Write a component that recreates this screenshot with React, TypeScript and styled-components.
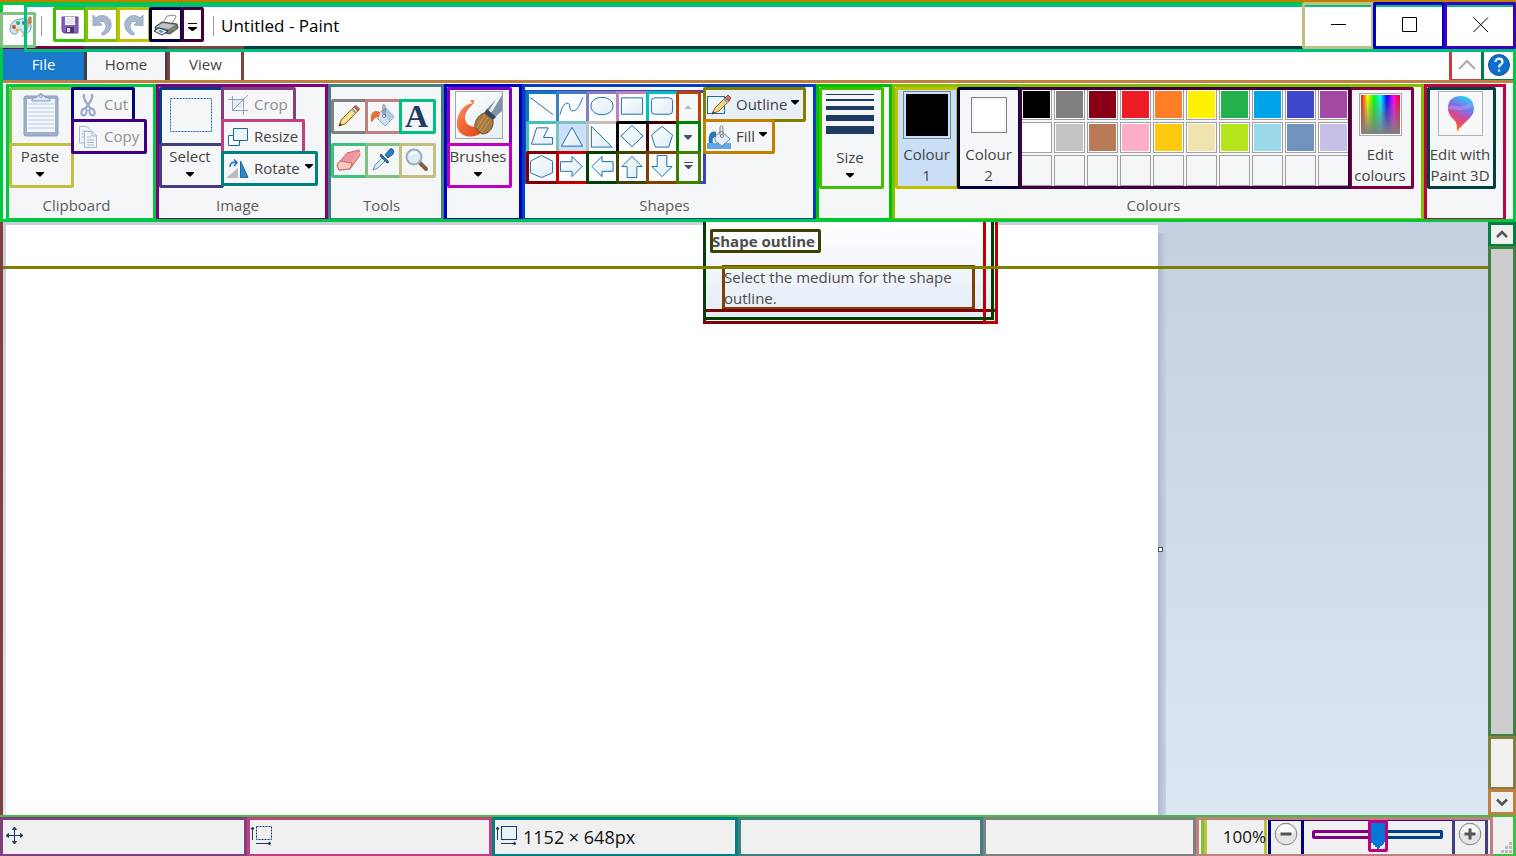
import React from "react";
import styled, { createGlobalStyle, css } from "styled-components";

const Global = createGlobalStyle`
  *, *::before, *::after { box-sizing: border-box; }
  body { margin: 0; overflow: hidden; }
  button, input { font: inherit; color: inherit; }
`;

const App_ = styled.div`
  display: flex;
  flex-direction: column;
  height: 100vh;
  border-top: 2px solid #c08000;
  background: #fff;
  color: #444;
  font-family: "Open Sans", "Noto Sans", sans-serif;
  font-size: 15px;
  line-height: 21px;
`;

const Frame = styled.div`
  border: 3px solid #00c840;
`;

/* ---------- title bar ---------- */
const TitleBar = styled.header`
  position: relative;
  display: flex;
  align-items: flex-start;
  height: 41px;
  &::after {
    content: "";
    position: absolute;
    inset: -1px -3px -6px 21px;
    border: 3px solid #00c080;
    pointer-events: none;
    z-index: 1;
  }
`;
const Boxed = css<{ $line: string }>`
  border: 3px solid ${(p) => p.$line};
  border-radius: 2px;
`;
const AppIcon = styled.div<{ $line: string }>`
  ${Boxed}
  width: 36px;
  height: 36px;
  margin: 7px 5px 0 -3px;
  display: flex;
  align-items: flex-start;
  justify-content: flex-end;
  position: relative;
`;
const Divider = styled.span`
  width: 1px;
  height: 20px;
  margin-top: 11px;
  background: #999;
`;
const QuickBar = styled.div`
  display: flex;
  margin: 2px 9px 0 11px;
  position: relative;
  z-index: 2;
`;
const QuickButton = styled.button<{ $line: string; $narrow?: boolean }>`
  ${Boxed}
  width: ${(p) => (p.$narrow ? 23 : 34)}px;
  height: 35px;
  padding: 0;
  background: none;
  display: flex;
  align-items: center;
  justify-content: center;
  & + & { margin-left: -2px; }
`;
const Title = styled.h1`
  margin: 8px 0 0 7px;
  flex: 1;
  color: #000;
  font-size: 17px;
  line-height: 26px;
  font-weight: 400;
`;
const WindowControls = styled.div`
  display: flex;
  margin: -3px -3px -3px 0;
  position: relative;
  z-index: 2;
`;
const WindowButton = styled.button<{ $line: string }>`
  ${Boxed}
  width: 72px;
  height: 47px;
  padding: 0 0 2px 2px;
  background: none;
  display: flex;
  align-items: center;
  justify-content: center;
  & + & { margin-left: -1px; }
`;

/* ---------- tabs ---------- */
const TabStrip = styled.nav`
  display: flex;
  height: 37px;
  border-bottom: 3px solid #c08040;
`;
const Tab = styled.button<{ $line: string; $kind?: "file" | "active" }>`
  border: 0 solid ${(p) => p.$line};
  border-width: ${(p) => (p.$kind === "file" ? "3px 0 0" : "3px 3px 0")};
  width: ${(p) => (p.$kind === "file" ? 81 : p.$kind === "active" ? 84 : 77)}px;
  margin-right: ${(p) => (p.$kind === "active" ? "-1px" : 0)};
  padding: 0 0 1px;
  background: ${(p) => (p.$kind === "file" ? "#1979ca" : p.$kind === "active" ? "#f5f6f8" : "#fff")};
  color: ${(p) => (p.$kind === "file" ? "#fff" : "#444")};
`;
const TabSpace = styled.div`
  flex: 1;
  border-top: 3px solid #004040;
`;
const TabTool = styled.button<{ $line: string }>`
  border: solid ${(p) => p.$line};
  border-width: 0 0 1px 3px;
  width: 32px;
  margin-top: 6px;
  padding: 0;
  background: none;
  display: flex;
  align-items: center;
  justify-content: center;
`;

/* ---------- ribbon ---------- */
const Ribbon = styled.div`
  display: flex;
  height: 136px;
  padding-left: 3px;
  background: #f5f6f8;
  border-top: 1px solid #fff;
`;
const Group = styled.section<{ $line: string; $width: number }>`
  flex: 0 0 ${(p) => p.$width}px;
  display: flex;
  flex-direction: column;
  border: 3px solid ${(p) => p.$line};
  border-bottom-width: 1px;
`;
const GroupBody = styled.div`
  display: flex;
  align-items: flex-start;
  flex: 1;
`;
const GroupLabel = styled.h2`
  margin: 0;
  padding: 0 9px 2px 0;
  text-align: center;
  color: #5c5c5c;
  font-size: 15px;
  font-weight: 400;
  line-height: 21px;
`;
const Split = styled.div`
  width: 65px;
  display: flex;
  flex-direction: column;
`;
const SplitIcon = styled.button<{ $line: string }>`
  ${Boxed}
  height: 59px;
  padding: 0 2px 3px 0;
  background: none;
  display: flex;
  align-items: center;
  justify-content: center;
`;
const SplitText = styled.button<{ $line: string }>`
  ${Boxed}
  height: 45px;
  margin-top: -3px;
  padding: 0 3px 2px 0;
  background: none;
  display: flex;
  flex-direction: column;
  align-items: center;
  white-space: nowrap;
`;
const Stack = styled.div`
  display: flex;
  flex-direction: column;
  align-items: flex-start;
  margin-left: -3px;
`;
const RowButton = styled.button<{ $line: string; $width: number; $tight?: boolean; $hot?: boolean }>`
  ${Boxed}
  width: ${(p) => p.$width}px;
  height: 35px;
  padding: 0 0 0 ${(p) => (p.$tight ? 1 : 4)}px;
  background: ${(p) => (p.$hot ? "#e8eff7" : "transparent")};
  display: flex;
  align-items: center;
  gap: ${(p) => (p.$tight ? 5 : 6)}px;
  white-space: nowrap;
  & + & { margin-top: -3px; }
  &:disabled { color: #8f8f8f; }
  svg { flex: none; }
`;
const ToolGrid = styled.div`
  display: grid;
  grid-template-columns: repeat(3, 34px);
  grid-auto-rows: 44px;
  padding-top: 12px;
`;
const ToolButton = styled.button<{ $line: string }>`
  ${Boxed}
  width: 37px;
  height: 35px;
  padding: 0 2px 2px 0;
  background: none;
  display: flex;
  align-items: center;
  justify-content: center;
`;
const Gallery = styled.div`
  width: 181px;
  height: 94px;
  margin-top: 3px;
  border: 3px solid #4040c0;
  background: #fcfdfe;
  display: flex;
`;
const ShapeGrid = styled.div`
  display: grid;
  grid-template-columns: repeat(5, 30px);
  grid-auto-rows: 30px;
  margin: -2px 0 0 -2px;
`;
const ShapeCell = styled.button<{ $line: string; $on?: boolean }>`
  ${Boxed}
  width: 33px;
  height: 33px;
  padding: 0 1px 2px 0;
  background: ${(p) => (p.$on ? "#cce1f9" : "#fcfdfe")};
  display: flex;
  align-items: center;
  justify-content: center;
`;
const GalleryScroll = styled.div`
  display: grid;
  grid-auto-rows: 30px;
  margin-top: -2px;
`;
const ScrollCell = styled.button<{ $line: string }>`
  ${Boxed}
  width: 25px;
  height: 33px;
  padding: 0 1px 1px 0;
  background: #f7f8fa;
  display: flex;
  align-items: center;
  justify-content: center;
`;
const TallButton = styled.button<{ $line: string; $width?: number; $on?: boolean }>`
  ${Boxed}
  width: ${(p) => p.$width ?? 65}px;
  height: 102px;
  padding: 0 3px 0 0;
  background: ${(p) => (p.$on ? "#c9dff7" : "transparent")};
  display: flex;
  flex-direction: column;
  align-items: center;
  white-space: nowrap;
  flex: none;
`;
const TallIcon = styled.span`
  height: 57px;
  padding-bottom: 5px;
  display: flex;
  align-items: center;
  justify-content: center;
`;
const ColourWell = styled.span<{ $size: number; $fill: string }>`
  width: ${(p) => p.$size}px;
  height: ${(p) => p.$size}px;
  border: 1px solid #808080;
  padding: 2px;
  background: ${(p) => p.$fill} content-box;
`;
const ColourRow = styled.div`
  display: flex;
  > button { padding-right: 1px; }
  > button + button { margin-left: -2px; }
`;
const Palette = styled.div`
  position: relative;
  display: grid;
  grid-template-columns: repeat(10, 31px);
  grid-auto-rows: 31px;
  gap: 2px;
  height: 102px;
  margin: 0 -2px;
  padding: 2px;
  &::after {
    content: "";
    position: absolute;
    inset: 0;
    border: 3px solid #400040;
    pointer-events: none;
  }
`;
const Swatch = styled.button<{ $fill?: string }>`
  border: 1px solid #a0a0a0;
  padding: 1px;
  background: ${(p) => (p.$fill ? `linear-gradient(${p.$fill}, ${p.$fill}) content-box, #fff` : "#f5f6f8")};
`;

/* ---------- tooltip ---------- */
const Tooltip = styled.div`
  position: absolute;
  left: 703px;
  top: 0;
  z-index: 2;
  isolation: isolate;
  &::before {
    content: "";
    position: absolute;
    z-index: 1;
    inset: 87px -4px -4px 0;
    border: 3px solid #800000;
  }
  &::after {
    content: "";
    position: absolute;
    z-index: 1;
    inset: 0 -4px -4px 280px;
    border: 3px solid #c00000;
    border-top: 0;
  }
`;
const TooltipBody = styled.div`
  width: 291px;
  height: 98px;
  padding: 7px 4px 0;
  border: 3px solid #004000;
  border-top: 0;
  background: linear-gradient(#fff, #e4ebf7) padding-box;
  color: #4c4c4c;
`;
const TooltipFront = styled.div`
  position: relative;
  z-index: 2;
  border: 3px solid #004000;
  border-top: 0;
  width: 291px;
  height: 98px;
  margin-top: -98px;
`;
const TooltipTitle = styled.strong`
  display: block;
  width: 111px;
  height: 24px;
  border: 3px solid #404000;
  border-radius: 2px;
  font-size: 15px;
  line-height: 18px;
  white-space: nowrap;
  text-indent: -1px;
`;
const TooltipText = styled.p`
  width: 253px;
  margin: 12px 0 0 12px;
  border: 3px solid #804000;
  height: 45px;
  line-height: 21px;
  > span {
    display: block;
    margin: -1px;
  }
`;

/* ---------- work area ---------- */
const WorkArea = styled.main`
  flex: 1;
  min-height: 0;
  position: relative;
  display: flex;
`;
const Desk = styled.div`
  flex: 1;
  min-width: 0;
  overflow: hidden;
  border-left: 3px solid #804040;
  padding: 3px;
  background: linear-gradient(#c5cfdf, #dce6f3);
  &::after {
    content: "";
    position: absolute;
    left: 3px;
    right: 28px;
    top: 44px;
    height: 3px;
    background: #808000;
    z-index: 3;
  }
`;
const Sheet = styled.div`
  position: relative;
  width: 1152px;
  height: 648px;
  background: #fff;
  &::before {
    content: "";
    position: absolute;
    left: 100%;
    top: 8px;
    width: 8px;
    height: 100%;
    background: linear-gradient(90deg, #acb9d0, #c6d1e2);
  }
`;
const Handle = styled.span`
  position: absolute;
  left: 100%;
  top: 50%;
  width: 5px;
  height: 5px;
  margin-top: -2px;
  border: 1px solid #555;
  background: #fff;
`;
const Scrollbar = styled.div`
  width: 28px;
  display: flex;
  flex-direction: column;
  background: #f0f0f0;
`;
const ScrollPart = styled.button<{ $line: string; $grow?: boolean; $height?: number; $fill?: string }>`
  border: 3px solid ${(p) => p.$line};
  flex: ${(p) => (p.$grow ? "1" : `0 0 ${p.$height}px`)};
  padding: 0;
  background: ${(p) => p.$fill ?? "#f0f0f0"};
  display: flex;
  align-items: center;
  justify-content: center;
  & + & { margin-top: -1px; }
`;

/* ---------- status bar ---------- */
const StatusBar = styled.footer`
  display: flex;
  height: 41px;
  border-top: 2px solid #40c040;
  background: #f0f0f0;
  color: #111;
  font-size: 18px;
`;
const StatusCell = styled.div<{ $line: string; $width: number; $grow?: boolean; $inset?: boolean }>`
  flex: ${(p) => (p.$grow ? 1 : 0)} 0 ${(p) => p.$width}px;
  border: 3px solid ${(p) => p.$line};
  border-bottom-width: 2px;
  padding-left: ${(p) => (p.$inset ? 2 : 0)}px;
  display: flex;
  align-items: center;
  gap: 6px;
  svg { margin-bottom: 3px; }
`;
const ZoomCell = styled.div`
  flex: none;
  display: flex;
  border: 3px solid #c08080;
  border-bottom-width: 2px;
  padding: 0 2px;
`;
const ZoomValue = styled.output`
  width: 66px;
  margin-right: 1px;
  border-left: 3px solid #80c040;
  box-shadow: inset 3px 0 #c0c040, inset -3px 0 #c0c040;
  font-size: 17px;
  line-height: 34px;
  text-align: right;
  padding-right: 1px;
`;
const ZoomButton = styled.button<{ $line: string }>`
  width: 36px;
  border: solid ${(p) => p.$line};
  border-width: 1px 3px 0;
  padding: 1px 1px 0 0;
  background: none;
  display: flex;
  justify-content: center;
`;
const ZoomTrack = styled.div`
  width: 148px;
  border-top: 1px solid #400080;
  padding-left: 8px;
`;
const Range = styled.input`
  appearance: none;
  display: block;
  width: 131px;
  height: 31px;
  margin: 0;
  background: none;
  &::-webkit-slider-runnable-track {
    height: 9px;
    margin-top: -4px;
    border: 3px solid transparent;
    border-radius: 2px;
    background: linear-gradient(#e7eaea, #e7eaea) padding-box,
      linear-gradient(90deg, #800080 50%, #004080 50%) border-box;
  }
  &::-webkit-slider-thumb {
    appearance: none;
    width: 20px;
    height: 32px;
    margin-top: -13px;
    border: 3px solid #c00080;
    border-radius: 2px;
    background: linear-gradient(#0078d7, #0078d7) 0 0 / 100% 19px no-repeat,
      linear-gradient(to top right, transparent 50%, #0078d7 50%) 0 19px / 7px 7px no-repeat,
      linear-gradient(to top left, transparent 50%, #0078d7 50%) 7px 19px / 7px 7px no-repeat,
      #f0f0f0;
  }
`;
const Grip = styled.div`
  width: 23px;
  border: solid #40c040;
  border-width: 0 3px 2px 0;
  display: flex;
  align-items: flex-end;
  justify-content: flex-end;
`;

/* ---------- drawings ---------- */
const Arrow = ({ fill = "#000" }: { fill?: string }) => (
  <svg width="8" height="5" viewBox="0 0 8 5"><path d="M0 0H8V1L4.5 4.5H3.5L0 1Z" fill={fill} /></svg>
);
const ArrowSlot = styled.span`
  height: 15px;
  display: flex;
  align-items: center;
`;
const RowArrow = styled.span`
  display: flex;
  margin: 0 0 4px -1px;
`;

const PaletteIcon = () => (
  <svg width="24" height="24" viewBox="0 0 24 24">
    <path d="M1 14C1 8 6 4 12 4C18 3 23 7 22 13C21 18 16 20 14 18C12 16 13 14 10 15C8 16 9 20 5 19C2 18 1 17 1 14Z" fill="#cfe6f5" stroke="#5c9fca" />
    <circle cx="5" cy="12" r="2" fill="#d6453c" /><circle cx="9" cy="8" r="2" fill="#3fae49" /><circle cx="15" cy="8" r="2" fill="#2a78d0" /><circle cx="8" cy="15" r="1.6" fill="#f0b41e" />
    <path d="M20 1L23 3L16 21L13 22L14 18Z" fill="#f0a95a" /><path d="M19 3L22 1L23 8L19 9Z" fill="#b68a68" />
  </svg>
);
const SaveIcon = () => (
  <svg width="18" height="18" viewBox="0 0 18 18">
    <path d="M1 1H17V17H3L1 15Z" fill="#8760b5" stroke="#63449a" /><path d="M4 1H14V9H4Z" fill="#fff" /><path d="M5 3H13M5 5H13M5 7H13" stroke="#c9c9d8" />
    <path d="M5 11H13V17H5Z" fill="#4b3670" /><path d="M6 12H9V16H6Z" fill="#e2d9f0" />
  </svg>
);
const UndoIcon = ({ flip }: { flip?: boolean }) => (
  <svg width="22" height="24" viewBox="0 0 22 24">
    <path transform={flip ? "translate(22 0) scale(-1 1)" : undefined} d="M2 2L5 5C9 1 16 2 19 7C22 13 19 20 12 22C11 22 10 21 11 20C15 17 16 13 14 10C12 8 10 8 8 9L11 12L2 12.500Z" fill="#a9b8cf" stroke="#98a9c4" />
  </svg>
);
const PrinterIcon = () => (
  <svg width="26" height="22" viewBox="0 0 26 22">
    <path d="M14 2L22 1L23 3L18 11L10 9Z" fill="#fff" stroke="#8a8a8a" />
    <path d="M2 13L9 8L24 10L25 14L17 20L3 17Z" fill="#777" stroke="#444" /><path d="M3 13L10 9L22 11L16 15Z" fill="#bfc3c7" />
    <path d="M1 17L6 14L15 17L9 21Z" fill="#eef7fc" stroke="#333" /><path d="M5 17L8 16L11 18L8 19Z" fill="#3c9ccc" /><circle cx="21" cy="15" r="1" fill="#76c043" />
  </svg>
);
const ClipboardIcon = () => (
  <svg width="36" height="44" viewBox="0 0 36 44">
    <rect x="1" y="3" width="34" height="40" rx="2" fill="#9fb0ca" stroke="#8a9dbb" /><rect x="4" y="6" width="28" height="33" fill="#f1f7fd" />
    <path d="M5 11H31M5 15H31M5 19H31M5 23H31M5 27H31M5 31H31M5 35H31" stroke="#b9cce3" />
    <path d="M9 8V6C11 4 14 5 15 3C16 0 20 0 21 3C22 5 25 4 27 6V8Z" fill="#dbe5f2" stroke="#8597b5" /><circle cx="18" cy="3" r="1.4" fill="#fff" stroke="#8597b5" />
  </svg>
);
const CutIcon = () => (
  <svg width="20" height="24" viewBox="0 0 20 24" fill="none" stroke="#9dacc6">
    <path d="M6 1C5 6 8 9 13 16M14 1C15 6 12 9 7 16" strokeWidth="2.4" /><ellipse cx="6" cy="19" rx="2.400" ry="3.400" strokeWidth="2.200" transform="rotate(20 6 19)" /><ellipse cx="14" cy="19" rx="2.400" ry="3.400" strokeWidth="2.200" transform="rotate(-20 14 19)" />
  </svg>
);
const CopyIcon = () => (
  <svg width="20" height="24" viewBox="0 0 20 24" fill="#f2f6fb" stroke="#a9b7ce">
    <path d="M1.500 1.500H9L13.500 6V18H1.500Z" /><path d="M4 6H9M4 9H9M4 12H9" /><path d="M6.500 6.500H14L18.500 11V22.500H6.500Z" /><path d="M14 6.500V11H18.500M9 12H13M9 15H16M9 17.500H16M9 20H16" fill="none" />
  </svg>
);
const SelectIcon = () => (
  <svg width="42" height="34" viewBox="0 0 42 34"><rect x=".5" y=".5" width="41" height="33" fill="none" stroke="#1b6ba8" strokeDasharray="2 1" /></svg>
);
const CropIcon = () => (
  <svg width="20" height="22" viewBox="0 0 20 22" fill="none" stroke="#8fa1bf">
    <path d="M6 6H14V14H6Z" fill="#e3ebf5" stroke="none" /><path d="M4.500 2V16.500H20M0 5.500H15.500V21M4.500 16.500L20 1" />
  </svg>
);
const ResizeIcon = () => (
  <svg width="20" height="20" viewBox="0 0 20 20" fill="#fff" stroke="#1b6ba8"><path d="M.5 8.500H11.500V18.500H.5Z" /><path d="M5.500 1.500H19.500V13.500H5.500Z" fill="#eaf4fa" /></svg>
);
const RotateIcon = () => (
  <svg width="20" height="20" viewBox="2 0 20 20" overflow="visible">
    <path d="M0 19H12V9Z" fill="#b9bcc0" /><path d="M14.500 2V18.500H22Z" fill="#2f86c8" stroke="#1b6ba8" /><path d="M4 8C4 4 6 3 10 3.500M8 .5L11 3.500L8 7" fill="none" stroke="#1976d2" strokeWidth="1.600" />
  </svg>
);
const PencilIcon = () => (
  <svg width="22" height="22" viewBox="0 0 22 22">
    <path d="M1 21L3 15L16 2L20 6L7 19Z" fill="#f7d775" stroke="#8a6a2c" /><path d="M5 17L18 4" stroke="#fff2b8" strokeWidth="1.500" /><path d="M16 2L18 0.500L21.500 4L20 6Z" fill="#d9626a" stroke="#a34a50" /><path d="M14 4L18 8" stroke="#8f9aa5" strokeWidth="2" /><path d="M1 21L2 18L4 20Z" fill="#333" />
  </svg>
);
const BucketIcon = () => (
  <svg width="25" height="24" viewBox="0 0 25 24">
    <path d="M9 9L16 4L24 13L15 22L8 15Z" fill="#cfe2f4" stroke="#8fa3bd" /><path d="M16 5L23 13L19 17L12 8Z" fill="#a9cbea" /><path d="M10 8C3 5 0 9 1 18C3 18 4 13 9 13Z" fill="#e6703a" /><path d="M13 10V2C13 0 15 0 15 3V12" fill="none" stroke="#70757c" /><circle cx="14" cy="12" r="1.500" fill="#fff" stroke="#777" />
  </svg>
);
const LetterGlyph = styled.span`
  color: #1f3b63;
  font: 700 32px/28px "Liberation Serif", serif;
`;
const EraserIcon = () => (
  <svg width="25" height="22" viewBox="0 0 25 22" stroke="#c06a6e"><path d="M1 16L11 4L23 1L24 6L14 20L3 21Z" fill="#f0969a" /><path d="M1 16L4 12L16 14L14 20L3 21Z" fill="#f9c9bd" /><path d="M16 14L24 3" fill="none" stroke="#f7b9bb" /></svg>
);
const DropperIcon = () => (
  <svg width="24" height="24" viewBox="0 0 24 24"><path d="M2 22L4 17L12 9L15 12L7 20Z" fill="#d7edf9" stroke="#6d8fae" /><path d="M14 7L19 1C22 0 24 3 22 6L17 10Z" fill="#2f7fc4" stroke="#205f9c" /><path d="M10 6L18 14L16 15L9 8Z" fill="#3272ae" stroke="#24598c" /></svg>
);
const MagnifierIcon = () => (
  <svg width="24" height="24" viewBox="0 0 24 24"><path d="M14 14L21 21" stroke="#85603f" strokeWidth="4" strokeLinecap="round" /><circle cx="9" cy="9" r="7.500" fill="#dceefb" stroke="#9bacbc" strokeWidth="2" /><path d="M5 8C6 5 9 4 12 5" stroke="#fff" strokeWidth="2" fill="none" /></svg>
);
const BrushIcon = () => (
  <svg width="48" height="48" viewBox="0 0 48 48">
    <defs>
      <linearGradient id="sheet" x2="1" y2="1"><stop offset="0" stopColor="#fff" /><stop offset="1" stopColor="#e3edf3" /></linearGradient>
      <linearGradient id="paint" x2="1" y2="1"><stop offset="0" stopColor="#f79a70" /><stop offset=".5" stopColor="#f2642f" /><stop offset="1" stopColor="#dd4a1c" /></linearGradient>
    </defs>
    <rect x=".5" y=".5" width="47" height="47" fill="url(#sheet)" stroke="#a4a8ad" />
    <path d="M19 9C20 12 17 14 15 16C10 21 9 27 11 31C13 35 18 36 22 36L26 42C22 46 12 47 7 43C0 39 1 28 5 21C8 16 12 13 18 12C17 11 14 10 16 9Z" fill="url(#paint)" />
    <path d="M47 2V20L39 27L31 19Z" fill="#8193aa" /><path d="M46 3L35 21" stroke="#eef3f8" strokeWidth="3" />
    <path d="M32 18L41 26L38 29L29 22Z" fill="#37475c" /><path d="M29 22C22 25 19 31 20 37L27 43C34 43 39 37 38 29Z" fill="#a77a41" stroke="#755028" /><path d="M30 24L22 37M33 26L24 40M36 28L27 41" stroke="#c39b62" />
  </svg>
);
const shapePaths: { name: string; line: string; d: string; open?: boolean }[] = [
  { name: "Line", line: "#0080c0", d: "M1 4L25 22", open: true },
  { name: "Curve", line: "#4080c0", d: "M1 22C3 14 5 11 8 10C13 9 9 19 15 18C21 17 22 9 25 4", open: true },
  { name: "Oval", line: "#8080c0", d: "M2 13C2 1 25 1 25 13C25 25 2 25 2 13Z" },
  { name: "Rectangle", line: "#c080c0", d: "M2.500 4.500H24.500V21.500H2.500Z" },
  { name: "Rounded rectangle", line: "#00c0c0", d: "M6 4.500H21Q24.500 4.500 24.500 8V18Q24.500 21.500 21 21.500H6Q2.500 21.500 2.500 18V8Q2.500 4.500 6 4.500Z" },
  { name: "Polygon", line: "#40c0c0", d: "M8 4.500H20L15 14.500H24.500V21.500H2.500Z" },
  { name: "Triangle", line: "#80c0c0", d: "M13.500 4L24.500 23.500H2.500Z" },
  { name: "Right-angled triangle", line: "#c0c0c0", d: "M2.500 3L24 24.500H2.500Z" },
  { name: "Diamond", line: "#000000", d: "M13.500 2L25 13L13.500 24L2 13Z" },
  { name: "Pentagon", line: "#400000", d: "M13.500 3L24.500 12L20.500 24.500H6.500L2.500 12Z" },
  { name: "Hexagon", line: "#800000", d: "M13 2L24.500 8V20L13 25L1.500 20V8Z" },
  { name: "Right arrow", line: "#c00000", d: "M1.500 8.500H13.500V3L24 13.500L13.500 24V18.500H1.500Z" },
  { name: "Left arrow", line: "#004000", d: "M25 8.500H13.500V3L3 13.500L13.500 24V18.500H25Z" },
  { name: "Up arrow", line: "#404000", d: "M8.500 25V13.500H3L13.500 3L24 13.500H18.500V25Z" },
  { name: "Down arrow", line: "#804000", d: "M8.500 2V13.500H3L13.500 24L24 13.500H18.500V2Z" },
];
const ShapeIcon = ({ d, open }: { d: string; open?: boolean }) => (
  <svg width="27" height="27" viewBox="0 0 27 27"><path d={d} fill={open ? "none" : "url(#glass)"} stroke="#1b6ba8" /></svg>
);
const OutlineIcon = () => (
  <svg width="24" height="24" viewBox="0 0 24 24"><rect x=".5" y="3.500" width="17" height="17" fill="#edf5fa" stroke="#1b6ba8" /><path d="M5 21L8 15L19 4L23 7L12 18Z" fill="#f3d37c" stroke="#8a6a2c" /><path d="M18 5L21 2L24 5L22 8Z" fill="#d66b69" stroke="#95504e" /><path d="M17 6L21 10" stroke="#9aa0a3" strokeWidth="2" /><path d="M5 21L6 18L8 20Z" fill="#333" /></svg>
);
const FillIcon = () => (
  <svg width="24" height="24" viewBox="0 0 24 24"><path d="M0 18H24V24H0Z" fill="#61a9e2" /><path d="M8 11L14 6L23 14L15 21L8 16Z" fill="#e2edf6" stroke="#79889a" /><path d="M9 7C3 5 1 11 2 18H6C5 14 6 12 9 12Z" fill="#2c78b5" /><path d="M13 10V3C13 0 16 0 16 3V11" fill="none" stroke="#777" /><circle cx="15" cy="11" r="1.500" fill="#fff" stroke="#777" /></svg>
);
const SizeIcon = () => (
  <svg width="48" height="44" viewBox="0 0 48 44"><path d="M0 0H48V1H0ZM0 5H48V7H0ZM0 12H48V16H0ZM0 21H48V27H0ZM0 32H48V40H0Z" fill="#1f3b63" /></svg>
);
const SpectrumIcon = () => (
  <svg width="43" height="43" viewBox="0 0 43 43">
    <defs>
      <linearGradient id="hue">{["#f00", "#ff0", "#0f0", "#0ff", "#00f", "#f0f", "#f00"].map((c, i) => <stop key={c + i} offset={i / 6} stopColor={c} />)}</linearGradient>
      <linearGradient id="fade" x2="0" y2="1"><stop offset="0" stopColor="#808080" stopOpacity="0" /><stop offset="1" stopColor="#808080" /></linearGradient>
    </defs>
    <rect x=".5" y=".5" width="42" height="42" fill="#fff" stroke="#aaa" /><path d="M2 2H41V41H2Z" fill="url(#hue)" /><path d="M2 2H41V41H2Z" fill="url(#fade)" />
  </svg>
);
const Paint3DIcon = () => (
  <svg width="45" height="47" viewBox="0 0 45 47">
    <defs><linearGradient id="drop" x1=".7" x2=".3" y2="1"><stop offset="0" stopColor="#25d3ea" /><stop offset=".35" stopColor="#7d70ec" /><stop offset=".6" stopColor="#d9488f" /><stop offset=".82" stopColor="#ee5a4f" /><stop offset="1" stopColor="#ffc928" /></linearGradient></defs>
    <rect x=".5" y=".5" width="44" height="44" fill="#f8f8f8" stroke="#b2b2b2" /><path d="M10 17C10 9 15 5 23 5C31 5 36 10 36 18C36 27 26 30 19 41C18 38 20 34 17 30C13 26 10 23 10 17Z" fill="url(#drop)" /><path d="M11 18C15 12 20 23 34 13" stroke="#b79af5" strokeWidth="4" fill="none" opacity=".5" />
  </svg>
);
const MoveIcon = () => (
  <svg width="19" height="19" viewBox="0 0 19 19" stroke="#1f3b63" fill="#1f3b63"><path d="M9.500 1V18M1 9.500H18" /><path d="M9.500 1L7.500 3.500H11.500ZM9.500 18L7.500 15.500H11.500ZM1 9.500L3.500 7.500V11.500ZM18 9.500L15.500 7.500V11.500Z" /></svg>
);
const ExtentIcon = ({ dashed }: { dashed?: boolean }) => (
  <svg width="22" height="20" viewBox="0 0 22 20" stroke="#1f3b63" fill="#1f3b63"><path d="M2.500 14V2M6 17.500H21" /><path d="M2.500 1L1 3H4ZM21 17.500L19 16V19Z" /><rect x="6.500" y=".5" width="15" height="13" fill={dashed ? "none" : "#e8f4f8"} strokeDasharray={dashed ? "2 1" : undefined} /></svg>
);
const ZoomIcon = ({ plus }: { plus?: boolean }) => (
  <svg width="24" height="24" viewBox="0 0 24 24"><circle cx="12" cy="12" r="10.800" fill="#e5e5e5" stroke="#858585" /><path d="M3 11C3 0 21 0 21 11Z" fill="#fafafa" /><path d={plus ? "M6.500 12H17.500M12 6.500V17.500" : "M6.500 12H17.500"} stroke="#555" strokeWidth="3" /></svg>
);
const Chevron = ({ down }: { down?: boolean }) => (
  <svg width="12" height="9" viewBox="0 0 12 9"><path d={down ? "M1 1.500L6 6.500L11 1.500" : "M1 7L6 2L11 7"} fill="none" stroke="#555" strokeWidth="2.500" /></svg>
);

const swatches = [
  "#000000", "#7f7f7f", "#880015", "#ed1c24", "#ff7f27", "#fff200", "#22b14c", "#00a2e8", "#3f48cc", "#a349a4",
  "#ffffff", "#c3c3c3", "#b97a57", "#ffaec9", "#ffc90e", "#efe4b0", "#b5e61d", "#99d9ea", "#7092be", "#c8bfe7",
];
const tools = [
  { name: "Pencil", line: "#808080", icon: <PencilIcon /> },
  { name: "Fill with colour", line: "#c08080", icon: <BucketIcon /> },
  { name: "Text", line: "#00c080", icon: <LetterGlyph>A</LetterGlyph> },
  { name: "Eraser", line: "#40c080", icon: <EraserIcon /> },
  { name: "Colour picker", line: "#80c080", icon: <DropperIcon /> },
  { name: "Magnifier", line: "#c0c080", icon: <MagnifierIcon /> },
];

export default function App() {
  return (
    <App_>
      <Global />
      <svg width="0" height="0" style={{ position: "absolute" }} aria-hidden="true">
        <defs><linearGradient id="glass" x2="1" y2="1"><stop offset="0" stopColor="#fff" /><stop offset="1" stopColor="#dcedf5" /></linearGradient></defs>
      </svg>
      <Frame>
        <TitleBar>
          <AppIcon $line="#80c080"><PaletteIcon /></AppIcon>
          <Divider />
          <QuickBar>
            <QuickButton $line="#40c000" aria-label="Save"><SaveIcon /></QuickButton>
            <QuickButton $line="#80c000" aria-label="Undo"><UndoIcon /></QuickButton>
            <QuickButton $line="#c0c000" aria-label="Redo"><UndoIcon flip /></QuickButton>
            <QuickButton $line="#000040" aria-label="Print"><PrinterIcon /></QuickButton>
            <QuickButton $line="#400040" $narrow aria-label="Customise Quick Access Toolbar">
              <svg width="9" height="18" viewBox="0 0 9 18"><path d="M0 7H9V8H0ZM0 11H9V12L5 15H4L0 12Z" /></svg>
            </QuickButton>
          </QuickBar>
          <Divider />
          <Title>Untitled - Paint</Title>
          <WindowControls>
            <WindowButton $line="#c0c080" aria-label="Minimise"><svg width="16" height="16"><path d="M0 7.500H15" stroke="#000" /></svg></WindowButton>
            <WindowButton $line="#0000c0" aria-label="Maximise"><svg width="16" height="16"><path d="M.5 .5H14.500V14.500H.5Z" stroke="#000" fill="none" /></svg></WindowButton>
            <WindowButton $line="#4000c0" aria-label="Close"><svg width="16" height="16"><path d="M.5 .5L15 15M15 .5L.5 15" stroke="#000" /></svg></WindowButton>
          </WindowControls>
        </TitleBar>
        <TabStrip>
          <Tab $line="#800040" $kind="file">File</Tab>
          <Tab $line="#404040" $kind="active">Home</Tab>
          <Tab $line="#804040">View</Tab>
          <TabSpace />
          <TabTool $line="#c04040" aria-label="Minimise the Ribbon"><svg width="18" height="14"><path d="M1 10L9 2L17 10" fill="none" stroke="#aaa" strokeWidth="2" /></svg></TabTool>
          <TabTool $line="#008040" aria-label="Help">
            <svg width="22" height="24" viewBox="0 0 22 24"><circle cx="11" cy="11" r="10.500" fill="#0b6fd0" stroke="#1a4f86" /><path d="M7.500 8C7.500 3.500 14.500 3.500 14.500 8C14.500 10.500 11 10.500 11 13.500M11 15.500V17.500" fill="none" stroke="#fff" strokeWidth="2.200" /></svg>
          </TabTool>
        </TabStrip>
        <Ribbon>
          <Group $line="#00c840" $width={150}>
            <GroupBody>
              <Split>
                <SplitIcon $line="#80c040" aria-label="Paste from clipboard"><ClipboardIcon /></SplitIcon>
                <SplitText $line="#c0c040">Paste<ArrowSlot><Arrow /></ArrowSlot></SplitText>
              </Split>
              <Stack>
                <RowButton disabled $line="#000080" $width={64}><CutIcon />Cut</RowButton>
                <RowButton disabled $line="#400080" $width={76}><CopyIcon />Copy</RowButton>
              </Stack>
            </GroupBody>
            <GroupLabel>Clipboard</GroupLabel>
          </Group>
          <Group $line="#800080" $width={172}>
            <GroupBody>
              <Split>
                <SplitIcon $line="#004080" aria-label="Rectangular selection"><SelectIcon /></SplitIcon>
                <SplitText $line="#404080">Select<ArrowSlot><Arrow /></ArrowSlot></SplitText>
              </Split>
              <Stack>
                <RowButton disabled $line="#804080" $width={75}><CropIcon />Crop</RowButton>
                <RowButton $line="#c04080" $width={84}><ResizeIcon />Resize</RowButton>
                <RowButton $line="#008080" $width={97}><RotateIcon />Rotate<RowArrow><Arrow /></RowArrow></RowButton>
              </Stack>
            </GroupBody>
            <GroupLabel>Image</GroupLabel>
          </Group>
          <Group $line="#408080" $width={116}>
            <GroupBody>
              <ToolGrid>
                {tools.map((t) => <ToolButton key={t.name} $line={t.line} aria-label={t.name}>{t.icon}</ToolButton>)}
              </ToolGrid>
            </GroupBody>
            <GroupLabel>Tools</GroupLabel>
          </Group>
          <Group $line="#0000c0" $width={78}>
            <GroupBody>
              <Split>
                <SplitIcon $line="#8000c0" aria-label="Brush"><BrushIcon /></SplitIcon>
                <SplitText $line="#c000c0">Brushes<ArrowSlot><Arrow /></ArrowSlot></SplitText>
              </Split>
            </GroupBody>
          </Group>
          <Group $line="#0040c0" $width={294}>
            <GroupBody>
              <Gallery>
                <ShapeGrid>
                  {shapePaths.map((s) => (
                    <ShapeCell key={s.name} $line={s.line} $on={s.name === "Triangle"} aria-label={s.name}><ShapeIcon d={s.d} open={s.open} /></ShapeCell>
                  ))}
                </ShapeGrid>
                <GalleryScroll>
                  <ScrollCell $line="#c04000" aria-label="Scroll up"><svg width="8" height="5"><path d="M0 4L4 0L8 4Z" fill="#b5b9c0" /></svg></ScrollCell>
                  <ScrollCell $line="#008000" aria-label="Scroll down"><Arrow fill="#44546c" /></ScrollCell>
                  <ScrollCell $line="#408000" aria-label="More shapes"><svg width="9" height="11"><path d="M0 0H9V1H0ZM0 3H9L5 7H4Z" fill="#44546c" /></svg></ScrollCell>
                </GalleryScroll>
              </Gallery>
              <Stack>
                <RowButton $tight $hot $line="#808000" $width={103}><OutlineIcon />Outline<RowArrow><Arrow /></RowArrow></RowButton>
                <RowButton $tight $line="#c08000" $width={72}><FillIcon />Fill<RowArrow><Arrow /></RowArrow></RowButton>
              </Stack>
            </GroupBody>
            <GroupLabel>Shapes</GroupLabel>
          </Group>
          <Group $line="#00c000" $width={76}>
            <GroupBody>
              <TallButton $line="#40c000"><TallIcon><SizeIcon /></TallIcon>Size<ArrowSlot><Arrow /></ArrowSlot></TallButton>
            </GroupBody>
          </Group>
          <Group $line="#80c000" $width={532}>
            <GroupBody>
              <ColourRow>
                <TallButton $on $line="#c0c000" $width={64}><TallIcon><ColourWell $size={48} $fill="#000" /></TallIcon>Colour<br />1</TallButton>
                <TallButton $line="#000040" $width={64}><TallIcon><ColourWell $size={36} $fill="#fff" /></TallIcon>Colour<br />2</TallButton>
              </ColourRow>
              <Palette>
                {Array.from({ length: 30 }, (_, i) => <Swatch key={i} $fill={swatches[i]} aria-label={`Colour swatch ${i + 1}`} />)}
              </Palette>
              <TallButton $line="#800040"><TallIcon><SpectrumIcon /></TallIcon>Edit<br />colours</TallButton>
            </GroupBody>
            <GroupLabel>Colours</GroupLabel>
          </Group>
          <Group $line="#c00040" $width={82}>
            <GroupBody>
              <TallButton $line="#004040" $width={69}><TallIcon><Paint3DIcon /></TallIcon>Edit with<br />Paint 3D</TallButton>
            </GroupBody>
          </Group>
        </Ribbon>
      </Frame>
      <WorkArea>
        <Desk><Sheet><Handle /></Sheet></Desk>
        <Scrollbar>
          <ScrollPart $line="#008040" $height={25} aria-label="Scroll canvas up"><Chevron /></ScrollPart>
          <ScrollPart $line="#408040" $grow $fill="#cdcdcd" aria-label="Scroll position" />
          <ScrollPart $line="#808040" $height={54} aria-label="Page down" />
          <ScrollPart $line="#c08040" $height={26} aria-label="Scroll canvas down"><Chevron down /></ScrollPart>
        </Scrollbar>
        <Tooltip role="tooltip">
          <TooltipBody>
            <TooltipTitle>Shape outline</TooltipTitle>
            <TooltipText><span>Select the medium for the shape outline.</span></TooltipText>
          </TooltipBody>
          <TooltipFront />
        </Tooltip>
      </WorkArea>
      <StatusBar>
        <StatusCell $inset $line="#804080" $width={247}><MoveIcon /></StatusCell>
        <StatusCell $line="#c04080" $width={245}><ExtentIcon dashed /></StatusCell>
        <StatusCell $line="#008080" $width={246}><ExtentIcon />1152 × 648px</StatusCell>
        <StatusCell $line="#408080" $width={245} />
        <StatusCell $line="#808080" $width={200} $grow />
        <ZoomCell>
          <ZoomValue>100%</ZoomValue>
          <ZoomButton $line="#000080" aria-label="Zoom out"><ZoomIcon /></ZoomButton>
          <ZoomTrack><Range type="range" min="0" max="100" defaultValue="50" aria-label="Zoom" /></ZoomTrack>
          <ZoomButton $line="#404080" aria-label="Zoom in"><ZoomIcon plus /></ZoomButton>
        </ZoomCell>
        <Grip><svg width="12" height="12"><path d="M8 0H11V3H8ZM4 4H7V7H4ZM8 4H11V7H8ZM0 8H3V11H0ZM4 8H7V11H4ZM8 8H11V11H8Z" fill="#bbb" /></svg></Grip>
      </StatusBar>
    </App_>
  );
}
